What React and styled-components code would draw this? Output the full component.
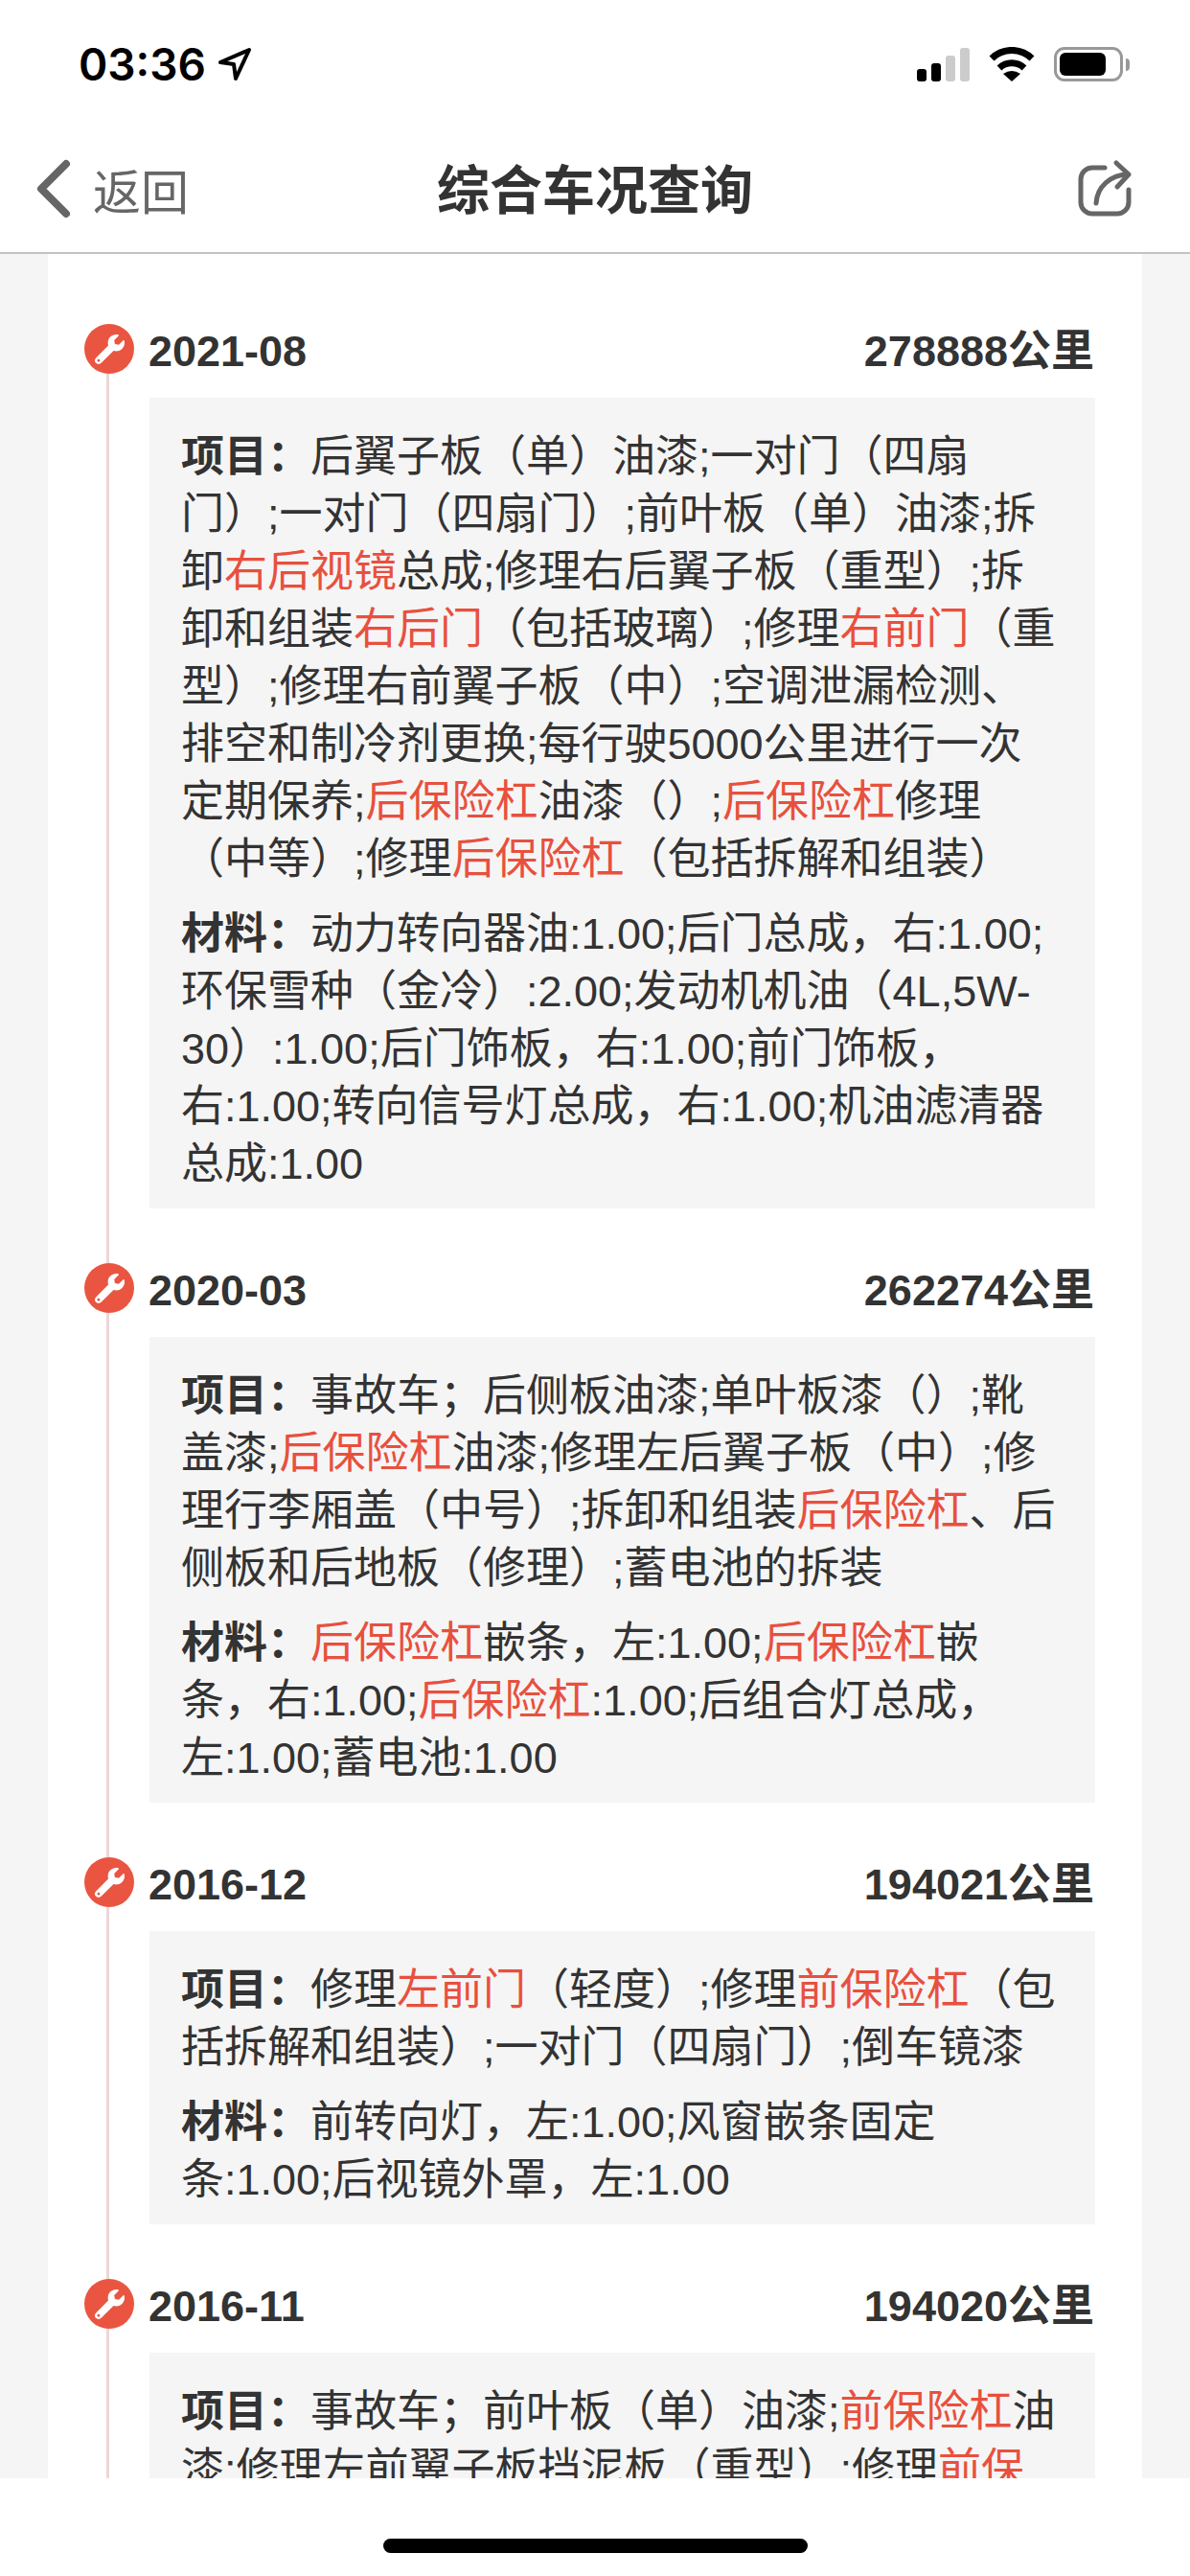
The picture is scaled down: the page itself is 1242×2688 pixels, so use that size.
import React from 'react';
import styled, { createGlobalStyle } from 'styled-components';
import { FaWrench } from 'react-icons/fa';

const GlobalStyle = createGlobalStyle`
  html, body {
    margin: 0;
    padding: 0;
    background: #fff;
  }
  * {
    box-sizing: border-box;
  }
`;

const records = [
  {
    date: '2021-08',
    km: '278888公里',
    items:
      '后翼子板（单）油漆;一对门（四扇门）;一对门（四扇门）;前叶板（单）油漆;拆卸*右后视镜*总成;修理右后翼子板（重型）;拆卸和组装*右后门*（包括玻璃）;修理*右前门*（重型）;修理右前翼子板（中）;空调泄漏检测、排空和制冷剂更换;每行驶5000公里进行一次定期保养;*后保险杠*油漆（）;*后保险杠*修理（中等）;修理*后保险杠*（包括拆解和组装）',
    parts:
      '动力转向器油:1.00;后门总成，右:1.00;环保雪种（金冷）:2.00;发动机机油（4L,5W-30）:1.00;后门饰板，右:1.00;前门饰板，右:1.00;转向信号灯总成，右:1.00;机油滤清器总成:1.00',
  },
  {
    date: '2020-03',
    km: '262274公里',
    items:
      '事故车；后侧板油漆;单叶板漆（）;靴盖漆;*后保险杠*油漆;修理左后翼子板（中）;修理行李厢盖（中号）;拆卸和组装*后保险杠*、后侧板和后地板（修理）;蓄电池的拆装',
    parts:
      '*后保险杠*嵌条，左:1.00;*后保险杠*嵌条，右:1.00;*后保险杠*:1.00;后组合灯总成，左:1.00;蓄电池:1.00',
  },
  {
    date: '2016-12',
    km: '194021公里',
    items: '修理*左前门*（轻度）;修理*前保险杠*（包括拆解和组装）;一对门（四扇门）;倒车镜漆',
    parts: '前转向灯，左:1.00;风窗嵌条固定条:1.00;后视镜外罩，左:1.00',
  },
  {
    date: '2016-11',
    km: '194020公里',
    items: '事故车；前叶板（单）油漆;*前保险杠*油漆;修理左前翼子板挡泥板（重型）;修理*前保险杠*',
  },
];

// segments wrapped in * are the damaged parts, shown in red
const Marked = ({ text }) =>
  text.split('*').map((piece, i) => (i % 2 ? <Hit key={i}>{piece}</Hit> : piece));

export default function App() {
  return (
    <Page>
      <GlobalStyle />
      <StatusBar>
        <Clock>
          03:36
          <svg width="36" height="36" viewBox="0 0 36 36" fill="none">
            <path
              d="M3 16 L33 3 L19 33 L17 18 Z"
              stroke="#000"
              strokeWidth="4"
              strokeLinejoin="round"
            />
          </svg>
        </Clock>
        <StatusIcons>
          <Signal>
            <SignalBar $h={13} />
            <SignalBar $h={19} />
            <SignalBar $h={27} $off />
            <SignalBar $h={35} $off />
          </Signal>
          <svg width="48" height="36" viewBox="0 0 48 36" fill="none">
            <path d="M3 12 A30 30 0 0 1 45 12" stroke="#000" strokeWidth="7" />
            <path d="M11 22 A19 19 0 0 1 37 22" stroke="#000" strokeWidth="7" />
            <path d="M15 28 Q24 22 33 28 L24 36 Z" fill="#000" />
          </svg>
          <Battery>
            <BatteryFill />
          </Battery>
        </StatusIcons>
      </StatusBar>

      <NavBar>
        <BackLink>
          <svg width="40" height="62" viewBox="0 0 40 62" fill="none">
            <path
              d="M33 5 L7 31 L33 57"
              stroke="#666"
              strokeWidth="8"
              strokeLinecap="round"
              strokeLinejoin="round"
            />
          </svg>
          返回
        </BackLink>
        <Title>综合车况查询</Title>
        <ShareButton>
          <svg width="64" height="64" viewBox="0 0 64 64" fill="none">
            <path
              d="M32 10 H19 A12 12 0 0 0 7 22 V46 A12 12 0 0 0 19 58 H45 A12 12 0 0 0 57 46 V33"
              stroke="#666"
              strokeWidth="5"
              strokeLinecap="round"
            />
            <path
              d="M23 47 C24 30 38 17 57 17 M44 5 L57 17 L45 30"
              stroke="#666"
              strokeWidth="5"
              strokeLinecap="round"
              strokeLinejoin="round"
            />
          </svg>
        </ShareButton>
      </NavBar>

      <Content>
        <Card>
          <Timeline>
            {records.map((r) => (
              <Record key={r.date}>
                <RecordHead>
                  <Pin>
                    <FaWrench size={31} color="#fff" />
                  </Pin>
                  <span>{r.date}</span>
                  <span>{r.km}</span>
                </RecordHead>
                <Detail>
                  <DetailText>
                    <b>项目：</b>
                    <Marked text={r.items} />
                  </DetailText>
                  {r.parts && (
                    <DetailText>
                      <b>材料：</b>
                      <Marked text={r.parts} />
                    </DetailText>
                  )}
                </Detail>
              </Record>
            ))}
          </Timeline>
        </Card>
      </Content>

      <HomeBar>
        <HomeIndicator />
      </HomeBar>
    </Page>
  );
}

const Page = styled.div`
  display: flex;
  flex-direction: column;
  width: 1242px;
  height: 2688px;
  overflow: hidden;
  background: #fff;
  color: #333;
  font-family: 'Liberation Sans', 'Noto Sans CJK SC', sans-serif;
`;

const StatusBar = styled.div`
  display: flex;
  flex: none;
  align-items: center;
  justify-content: space-between;
  height: 132px;
  padding: 2px 70px 0 82px;
`;

const Clock = styled.div`
  display: flex;
  align-items: center;
  gap: 12px;
  color: #000;
  font-family: Inter, sans-serif;
  font-size: 46px;
  font-weight: 600;
`;

const StatusIcons = styled.div`
  display: flex;
  align-items: center;
  gap: 20px;
`;

const Signal = styled.div`
  display: flex;
  align-items: flex-end;
  gap: 5px;
  height: 36px;
`;

const SignalBar = styled.i`
  display: block;
  width: 10px;
  height: ${(p) => p.$h}px;
  border-radius: 3px;
  background: ${(p) => (p.$off ? '#ccc' : '#000')};
`;

const Battery = styled.div`
  position: relative;
  width: 72px;
  height: 36px;
  padding: 3px;
  border: 3px solid #999;
  border-radius: 11px;
  &::after {
    content: '';
    position: absolute;
    top: 9px;
    right: -10px;
    width: 4px;
    height: 13px;
    border-radius: 0 4px 4px 0;
    background: #999;
  }
`;

const BatteryFill = styled.div`
  width: 48px;
  height: 100%;
  border-radius: 6px;
  background: #000;
`;

const NavBar = styled.div`
  display: grid;
  flex: none;
  grid-template-columns: 1fr auto 1fr;
  align-items: center;
  height: 133px;
  padding-bottom: 2px;
  border-bottom: 2px solid #c2c2c2;
`;

const BackLink = styled.div`
  display: flex;
  align-items: center;
  gap: 21px;
  margin-left: 36px;
  color: #666;
  font-size: 50px;
`;

const Title = styled.div`
  padding-bottom: 6px;
  font-size: 55px;
  font-weight: 700;
`;

const ShareButton = styled.div`
  display: flex;
  justify-content: flex-end;
  margin-right: 57px;
`;

const Content = styled.div`
  flex: 1;
  min-height: 0;
  overflow: hidden;
  padding: 0 50px;
  background: #f5f5f5;
`;

const Card = styled.div`
  height: 100%;
  padding: 16px 49px 0 106px;
  background: #fff;
`;

const Timeline = styled.div`
  display: flex;
  flex-direction: column;
`;

const Record = styled.section`
  position: relative;
  padding-top: 54px;
  &::before {
    content: '';
    position: absolute;
    top: 0;
    bottom: 0;
    left: -45px;
    width: 3px;
    background: #eed6d6;
  }
  &:first-child::before {
    top: 70px;
  }
`;

const RecordHead = styled.div`
  position: relative;
  display: flex;
  align-items: baseline;
  justify-content: space-between;
  height: 60px;
  margin-bottom: 20px;
  padding: 2px 1px 0 0;
  font-size: 45px;
  font-weight: 700;
  line-height: 60px;
  span:first-of-type {
    margin-left: -1px;
  }
`;

const Pin = styled.div`
  position: absolute;
  top: 3px;
  left: -68px;
  display: flex;
  align-items: center;
  justify-content: center;
  width: 52px;
  height: 52px;
  border-radius: 50%;
  background: #ea5541;
`;

const Detail = styled.div`
  display: flex;
  flex-direction: column;
  gap: 18px;
  padding: 32px 34px 16px 33px;
  background: #f5f5f5;
`;

const DetailText = styled.p`
  margin: 0;
  font-size: 45px;
  line-height: 60px;
  b {
    font-weight: 700;
  }
`;

const Hit = styled.span`
  color: #e8503e;
`;

const HomeBar = styled.div`
  flex: none;
  height: 102px;
  padding-top: 63px;
  background: #fff;
`;

const HomeIndicator = styled.div`
  width: 443px;
  height: 15px;
  margin: 0 auto;
  border-radius: 8px;
  background: #000;
`;
